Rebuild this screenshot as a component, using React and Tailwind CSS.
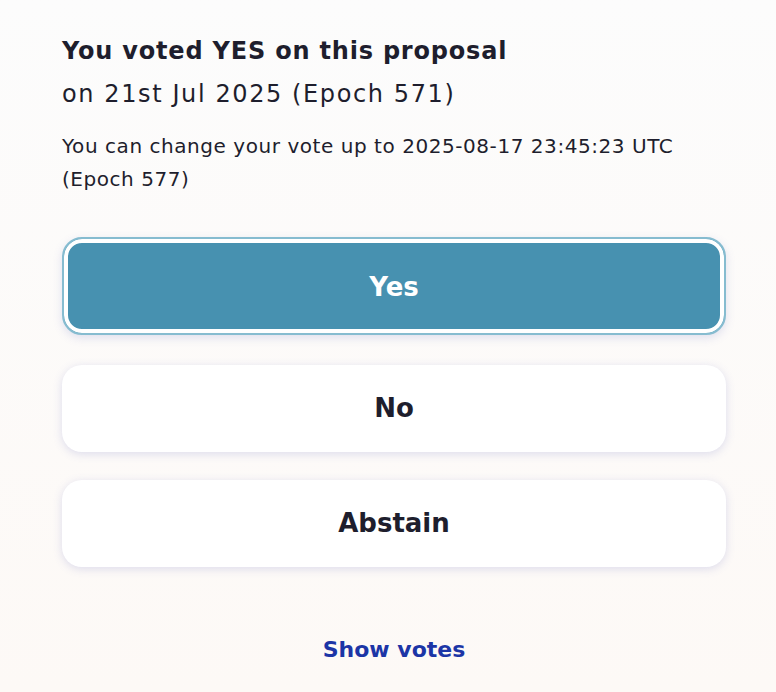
export default function App() {
  return (
    <div
      className="min-h-[692px] w-full bg-gradient-to-b from-[#fcfcfc] to-[#fdf9f6] pl-[62px] pr-[50px] pt-[35px] text-[#1e1e2d]"
      style={{ fontFamily: "'DejaVu Sans', 'Noto Sans', sans-serif" }}
    >
      {/* Vote summary */}
      <h2 className="text-[24px] font-bold leading-[32px] tracking-[0.8px]">You voted YES on this proposal</h2>
      <p className="mt-[11px] text-[24px] leading-[32px] tracking-[1.6px]">on 21st Jul 2025 (Epoch 571)</p>
      <p className="mt-[20px] text-[20px] leading-[33px] tracking-[0.55px]">
        You can change your vote up to 2025-08-17 23:45:23 UTC (Epoch 577)
      </p>

      {/* Options */}
      <div className="mt-[41px] flex flex-col gap-[28px]">
        <button className="mb-[2px] h-[98px] w-full rounded-[20px] border-2 border-[#86bcd0] bg-[#4791b0] pt-[2px] text-[26px] font-bold text-white shadow-[inset_0_0_0_4px_#ffffff,0_3px_10px_rgba(90,100,190,0.18)]">
          Yes
        </button>
        <button className="h-[87px] w-full rounded-[20px] bg-white text-[26px] font-bold shadow-[0_2px_10px_rgba(90,100,190,0.2)]">
          No
        </button>
        <button className="h-[87px] w-full rounded-[20px] bg-white text-[26px] font-bold shadow-[0_2px_10px_rgba(90,100,190,0.2)]">
          Abstain
        </button>
      </div>

      <div className="mt-[68px] text-center">
        <a href="#" className="text-[22px] font-bold leading-[30px] text-[#1c35a6]">
          Show votes
        </a>
      </div>
    </div>
  );
}
